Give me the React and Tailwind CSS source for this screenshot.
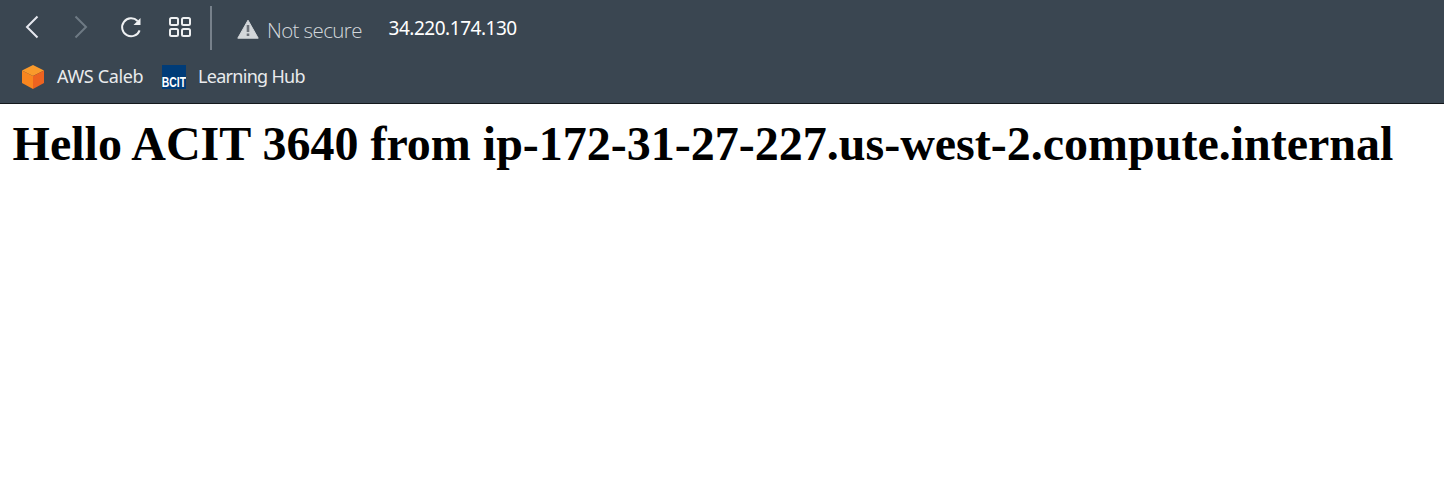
function Toolbar() {
  return (
    <div className="flex h-[55px] items-start text-[#eef0f2]">
      <svg className="ml-[22px] mt-[12px] h-[30px] w-[20px]" viewBox="0 0 20 30" fill="none" stroke="#e6e8ef" strokeWidth="2">
        <path d="M15.5 4.5 5 15 15.5 25.5" />
      </svg>
      <svg className="ml-[30px] mt-[12px] h-[30px] w-[20px]" viewBox="0 0 20 30" fill="none" stroke="#6e7a84" strokeWidth="2">
        <path d="M3.5 4.5 14 15 3.5 25.5" />
      </svg>
      <svg className="ml-[27px] mt-[15px] h-[24px] w-[24px]" viewBox="0 0 24 24" fill="none">
        <path d="M20.6 15.3A9 9 0 1 1 18.6 6" stroke="#eef0f2" strokeWidth="2" />
        <path d="M21.5 3V10H14.5L17 7.5Z" fill="#eef0f2" />
      </svg>
      <svg className="ml-[25px] mt-[15px] h-[24px] w-[24px]" viewBox="0 0 24 24" fill="none" stroke="#eef0f2" strokeWidth="2">
        <rect x="2" y="3" width="8" height="7" rx="1.5" />
        <rect x="14" y="3" width="8" height="7" rx="1.5" />
        <rect x="2" y="14" width="8" height="7" rx="1.5" />
        <rect x="14" y="14" width="8" height="7" rx="1.5" />
      </svg>
      <div className="ml-[18px] mt-[6px] h-[44px] w-[2px] bg-[#77818b]" />
      <svg className="ml-[25px] mt-[19px] h-[21px] w-[23px]" viewBox="0 0 23 21">
        <path d="M11 1.2 21.2 19.2H.8Z" fill="#d3d7da" stroke="#d3d7da" strokeWidth="1" strokeLinejoin="round" />
        <path d="M9.7 6h2.6v7H9.7zM9.7 14.5h2.6v2.4H9.7z" fill="#6b7178" />
      </svg>
      <span className="ml-[7px] mt-[16px] w-[121.5px] whitespace-nowrap font-['Open_Sans',sans-serif] text-[20.5px] font-light leading-[28px] tracking-[-0.6px] text-[#d3d8dc]">
        Not secure
      </span>
      <span className="mt-[15px] whitespace-nowrap font-['Noto_Sans',sans-serif] text-[19px] leading-[26px] tracking-[-0.47px] text-white">
        34.220.174.130
      </span>
    </div>
  );
}

function Bookmarks() {
  return (
    <div className="flex h-[48px] items-start font-['Noto_Sans',sans-serif] text-[18px] leading-[26px] text-[#e9ebed]">
      <svg className="ml-[21px] mt-[9px] h-[26px] w-[24px]" viewBox="0 0 24 26">
        <path d="M12 1 23 6.5 12 12 1 6.5Z" fill="#fa9a2b" />
        <path d="M1 6.5 12 12V25L1 19Z" fill="#f9861f" />
        <path d="M23 6.5 12 12V25L23 19Z" fill="#ee6320" />
      </svg>
      <span className="ml-[12px] mt-[8px] w-[105px] whitespace-nowrap tracking-[-0.35px]">AWS Caleb</span>
      <div className="mt-[10px] flex h-[24px] w-[24px] items-end justify-center overflow-hidden bg-[#003c78]">
        <span className="origin-bottom scale-x-[0.72] font-['Liberation_Sans',sans-serif] text-[14.5px] font-bold leading-[13px] text-white">BCIT</span>
      </div>
      <span className="ml-[12px] mt-[8px] whitespace-nowrap tracking-[-0.7px]">Learning Hub</span>
    </div>
  );
}

export default function App() {
  return (
    <div className="h-[484px] w-[1444px] overflow-hidden bg-white">
      <header className="h-[104px] border-b border-[#14181c] bg-[#3a4651]">
        <Toolbar />
        <Bookmarks />
      </header>
      <main className="pl-[12.6px] pt-[12px]">
        <h1 className="whitespace-nowrap font-['Liberation_Serif',serif] text-[48px] font-bold leading-[55px] text-black">
          Hello ACIT 3640 from ip-172-31-27-227.us-west-2.compute.internal
        </h1>
      </main>
    </div>
  );
}
